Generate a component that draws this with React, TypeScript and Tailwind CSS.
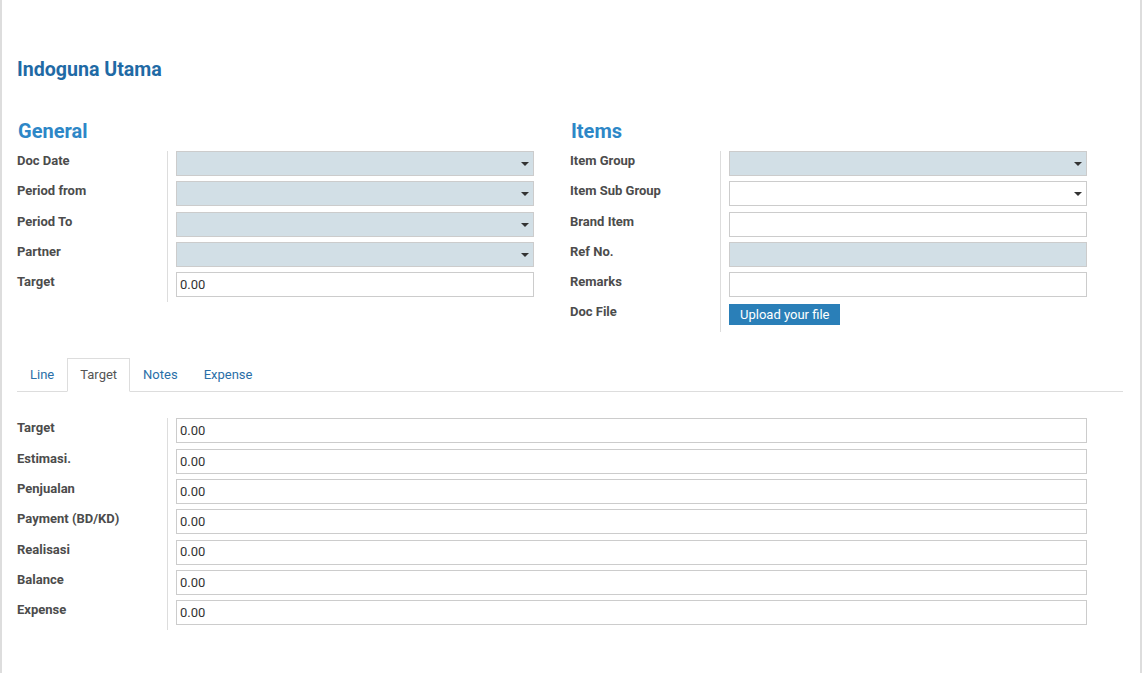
import React from "react";

type Field = { label: string; kind: "select" | "selectWhite" | "input" | "readonly" | "upload"; value?: string };

const general: Field[] = [
  { label: "Doc Date", kind: "select" },
  { label: "Period from", kind: "select" },
  { label: "Period To", kind: "select" },
  { label: "Partner", kind: "select" },
  { label: "Target", kind: "input", value: "0.00" }
];

const items: Field[] = [
  { label: "Item Group", kind: "select" },
  { label: "Item Sub Group", kind: "selectWhite" },
  { label: "Brand Item", kind: "input" },
  { label: "Ref No.", kind: "readonly" },
  { label: "Remarks", kind: "input" },
  { label: "Doc File", kind: "upload" }
];

const targets = [
  "Target",
  "Estimasi.",
  "Penjualan",
  "Payment (BD/KD)",
  "Realisasi",
  "Balance",
  "Expense"
];

const tabs = ["Line", "Target", "Notes", "Expense"];

function Caret() {
  return (
    <svg width="8" height="4" viewBox="0 0 8 4" className="absolute right-[4px] top-[10px]">
      <path d="M0 0 H8 L4 4 Z" fill="#333" />
    </svg>
  );
}

function Control({ f }: { f: Field }) {
  switch (f.kind) {
    case "select":
      return <div className="relative h-[25px] border border-[#cccccc] bg-[#d2dfe6]"><Caret /></div>;
    case "selectWhite":
      return <div className="relative h-[25px] border border-[#cccccc] bg-white"><Caret /></div>;
    case "readonly":
      return <div className="h-[25px] border border-[#cccccc] bg-[#d2dfe6]" />;
    case "upload":
      return (
        <div className="h-[25px]">
          <button className="h-[21px] bg-[#2a7fb8] px-[11px] text-[13px] leading-[21px] text-white">
            Upload your file
          </button>
        </div>
      );
    default:
      return (
        <div className="flex h-[25px] items-center border border-[#cccccc] bg-white px-[3px] text-[13px] text-[#333]">
          {f.value}
        </div>
      );
  }
}

function FieldGroup({ fields }: { fields: Field[] }) {
  return (
    <div className="grid grid-cols-[151px_1fr] pr-[36px]">
      <div className="flex flex-col gap-[5.3px] border-r border-[#dddddd] pb-[5px]">
        {fields.map((f) => (
          <div key={f.label} className="h-[25px] text-[13px] font-bold leading-[19px] text-[#4c4c4c]">
            {f.label}
          </div>
        ))}
      </div>
      <div className="flex flex-col gap-[5.3px] pl-[8px]">
        {fields.map((f) => (
          <Control key={f.label} f={f} />
        ))}
      </div>
    </div>
  );
}

export default function App() {
  return (
    <div
      className="min-h-[673px] w-[1142px] border-x-2 border-[#dddddd] bg-white pl-[15px] pt-[58px]"
      style={{ fontFamily: "Roboto, 'Liberation Sans', sans-serif" }}
    >
      <h1 className="text-[19.6px] font-bold leading-[24px] text-[#1f6aa5]">Indoguna Utama</h1>

      <div className="mt-[37px] grid w-[1106px] grid-cols-2">
        <div>
          <h2 className="mb-[8px] pl-[1px] text-[20px] font-bold leading-[24px] text-[#2d87c7]">General</h2>
          <FieldGroup fields={general} />
        </div>
        <div>
          <h2 className="mb-[8px] pl-[1px] text-[20px] font-bold leading-[24px] text-[#2d87c7]">Items</h2>
          <FieldGroup fields={items} />
        </div>
      </div>

      <div className="mt-[26px] flex w-[1106px] border-b border-[#dddddd]">
        {tabs.map((t) => (
          <div
            key={t}
            className={
              t === "Target"
                ? "-mb-[1px] h-[34px] border border-b-white border-[#dddddd] bg-white px-[12px] text-[13px] leading-[32px] text-[#555]"
                : "h-[33px] px-[13px] text-[13px] leading-[33px] text-[#2a6fa8]"
            }
          >
            {t}
          </div>
        ))}
      </div>

      <div className="mt-[26px] w-[1106px]">
        <FieldGroup fields={targets.map((t) => ({ label: t, kind: "input", value: "0.00" }))} />
      </div>
    </div>
  );
}
